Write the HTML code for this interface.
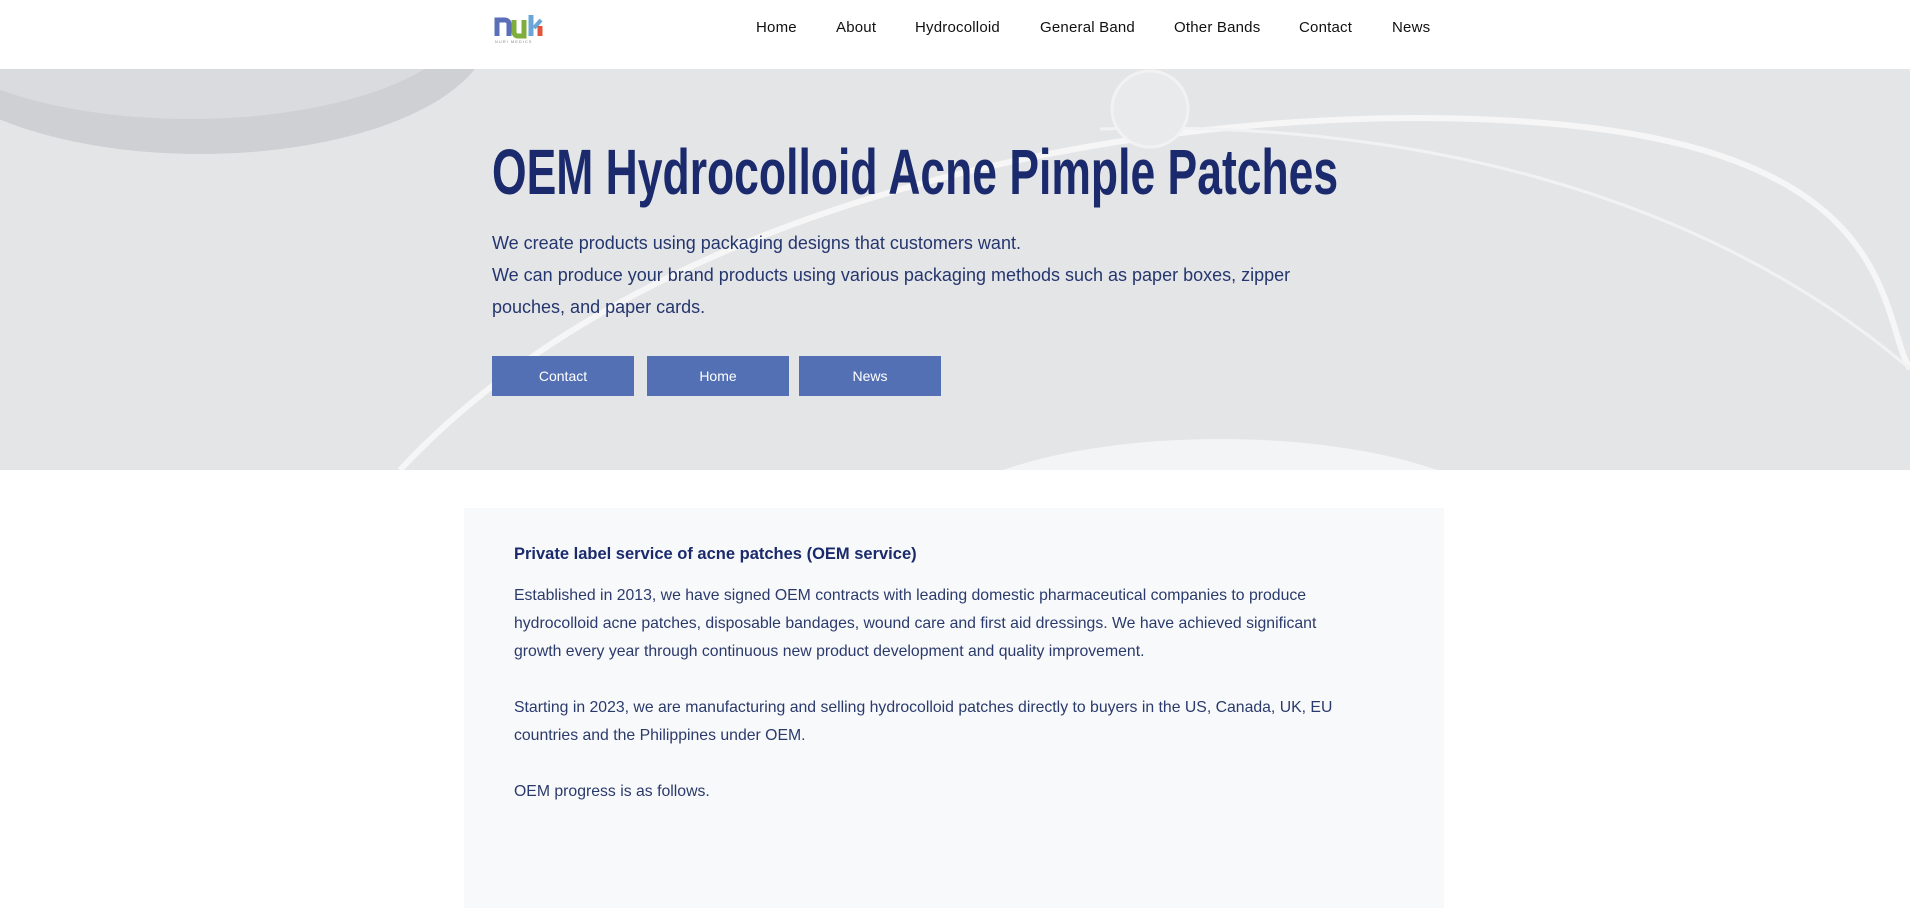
<!DOCTYPE html>
<html><head><meta charset="utf-8"><style>
*{margin:0;padding:0;box-sizing:border-box}
body{width:1910px;height:890px;overflow:hidden;background:#fff;font-family:"Liberation Sans",sans-serif;position:relative}
.hdr{position:absolute;left:0;top:0;width:1910px;height:69px;background:#fff}
.nav{position:absolute;top:19px;font-size:15px;color:#111;letter-spacing:.2px}
.hero{position:absolute;left:0;top:69px;width:1910px;height:401px;background:#e4e5e7;overflow:hidden}
h1{position:absolute;left:492px;top:135px;font-size:64px;font-weight:bold;color:#1a2a6c;white-space:nowrap;transform:scaleX(.695);transform-origin:left top;letter-spacing:0}
.sub{position:absolute;left:492px;top:227px;font-size:18px;line-height:32px;color:#25366e;white-space:nowrap}
.btn{position:absolute;top:356px;width:142px;height:40px;background:#5470b4;color:#fff;font-size:14px;text-align:center;line-height:40px}
.box{position:absolute;left:464px;top:508px;width:980px;height:400px;background:#f8f9fa}
.h2{position:absolute;left:514px;top:545px;font-size:16.5px;font-weight:bold;color:#1a2a6c;white-space:nowrap}
.p{position:absolute;left:514px;font-size:15.8px;line-height:28px;color:#2b3a6c;white-space:nowrap}
</style></head><body>
<div class="hdr">
 <svg style="position:absolute;left:494px;top:12px" width="52" height="32" viewBox="0 0 52 32">
  <path d="M3 24V8h8a4 4 0 0 1 4 4v12" fill="none" stroke="#5a6fb8" stroke-width="5"/>
  <path d="M20 8v12a4 4 0 0 0 4 4h6V8" fill="none" stroke="#7fae3c" stroke-width="5"/>
  <path d="M37 3v21" stroke="#6aa7d8" stroke-width="5"/>
  <path d="M40 16l7-8" stroke="#6aa7d8" stroke-width="4"/>
  <path d="M46 14v10" stroke="#e0563a" stroke-width="5"/>
  <text x="1" y="31" font-size="4" fill="#888" font-family="Liberation Sans" letter-spacing="1">NURI MEDICS</text>
 </svg>
 <div class="nav" style="left:756px">Home</div>
 <div class="nav" style="left:836px">About</div>
 <div class="nav" style="left:915px">Hydrocolloid</div>
 <div class="nav" style="left:1040px">General Band</div>
 <div class="nav" style="left:1174px">Other Bands</div>
 <div class="nav" style="left:1299px">Contact</div>
 <div class="nav" style="left:1392px">News</div>
</div>
<div class="hero">
 <svg style="position:absolute;left:0;top:0" width="1910" height="401">
  <ellipse cx="200" cy="-40" rx="290" ry="125" fill="#cfd0d3"/>
  <ellipse cx="190" cy="-60" rx="280" ry="110" fill="#dadbde"/>
  <path d="M400 401 C 700 80, 1300 20, 1600 60 S 1880 250, 1910 300" fill="none" stroke="#f6f6f7" stroke-width="6"/>
  <path d="M1100 60 C 1400 50, 1700 120, 1910 300" fill="none" stroke="#f1f2f3" stroke-width="3"/>
  <circle cx="1150" cy="40" r="38" fill="#e9eaec" stroke="#f2f2f3" stroke-width="3"/>
  <ellipse cx="1220" cy="470" rx="300" ry="100" fill="#f3f4f5"/>
 </svg>
</div>
<h1>OEM Hydrocolloid Acne Pimple Patches</h1>
<div class="sub">We create products using packaging designs that customers want.<br>We can produce your brand products using various packaging methods such as paper boxes, zipper<br>pouches, and paper cards.</div>
<div class="btn" style="left:492px">Contact</div>
<div class="btn" style="left:647px">Home</div>
<div class="btn" style="left:799px">News</div>
<div class="box"></div>
<div class="h2">Private label service of acne patches (OEM service)</div>
<div class="p" style="top:582px">Established in 2013, we have signed OEM contracts with leading domestic pharmaceutical companies to produce<br>hydrocolloid acne patches, disposable bandages, wound care and first aid dressings. We have achieved significant<br>growth every year through continuous new product development and quality improvement.</div>
<div class="p" style="top:694px">Starting in 2023, we are manufacturing and selling hydrocolloid patches directly to buyers in the US, Canada, UK, EU<br>countries and the Philippines under OEM.</div>
<div class="p" style="top:778px">OEM progress is as follows.</div>
</body></html>
